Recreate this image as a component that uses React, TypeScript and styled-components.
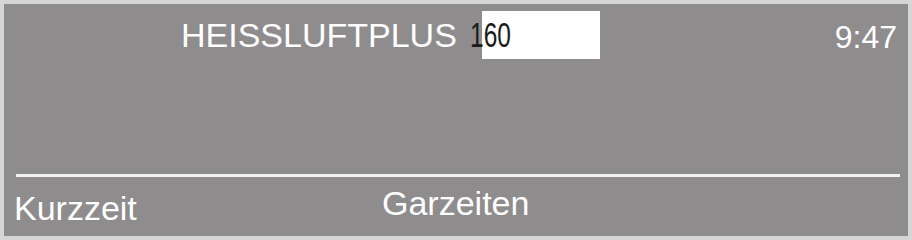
import React from "react";
import styled, { createGlobalStyle } from "styled-components";

const Global = createGlobalStyle`
  html, body { margin: 0; padding: 0; background: #d9d9d9; }
  * { box-sizing: border-box; }
`;

const Screen = styled.div`
  width: 912px;
  height: 240px;
  border: 4px solid #d6d6d6;
  background: #8e8c8d;
  display: flex;
  flex-direction: column;
  font-family: "Liberation Sans", Arial, sans-serif;
  color: #ffffff;
`;

const Header = styled.div`
  display: flex;
  align-items: center;
  height: 48px;
  margin-top: 7px;
  padding-left: 177px;
  padding-right: 11px;
`;

const Title = styled.div`
  width: 301px;
  font-size: 34px;
  line-height: 48px;
  white-space: nowrap;
`;

const ValueBox = styled.div`
  width: 118px;
  height: 48px;
  background: #ffffff;
  display: flex;
  align-items: center;
  overflow: visible;
`;

const ValueText = styled.span`
  display: inline-block;
  margin-left: -12px;
  font-size: 35px;
  line-height: 48px;
  color: #1a1a1a;
  transform: scaleX(0.7);
  transform-origin: left center;
`;

const Clock = styled.div`
  margin-left: auto;
  font-size: 32px;
  line-height: 48px;
  padding-top: 3px;
`;

const Divider = styled.div`
  height: 3px;
  background: #f2f2f2;
  margin: 115px 8px 0 12px;
`;

const Footer = styled.div`
  display: grid;
  grid-template-columns: 368px 1fr;
  padding-left: 10px;
`;

const SoftKey = styled.div<{ $top: number }>`
  font-size: 34px;
  line-height: 34px;
  padding-top: ${(p) => p.$top}px;
  white-space: nowrap;
`;

export default function App() {
  return (
    <>
      <Global />
      <Screen>
        <Header>
          <Title>HEISSLUFTPLUS</Title>
          <ValueBox>
            <ValueText>160</ValueText>
          </ValueBox>
          <Clock>9:47</Clock>
        </Header>
        <Divider />
        <Footer>
          <SoftKey $top={14}>Kurzzeit</SoftKey>
          <SoftKey $top={9}>Garzeiten</SoftKey>
        </Footer>
      </Screen>
    </>
  );
}
